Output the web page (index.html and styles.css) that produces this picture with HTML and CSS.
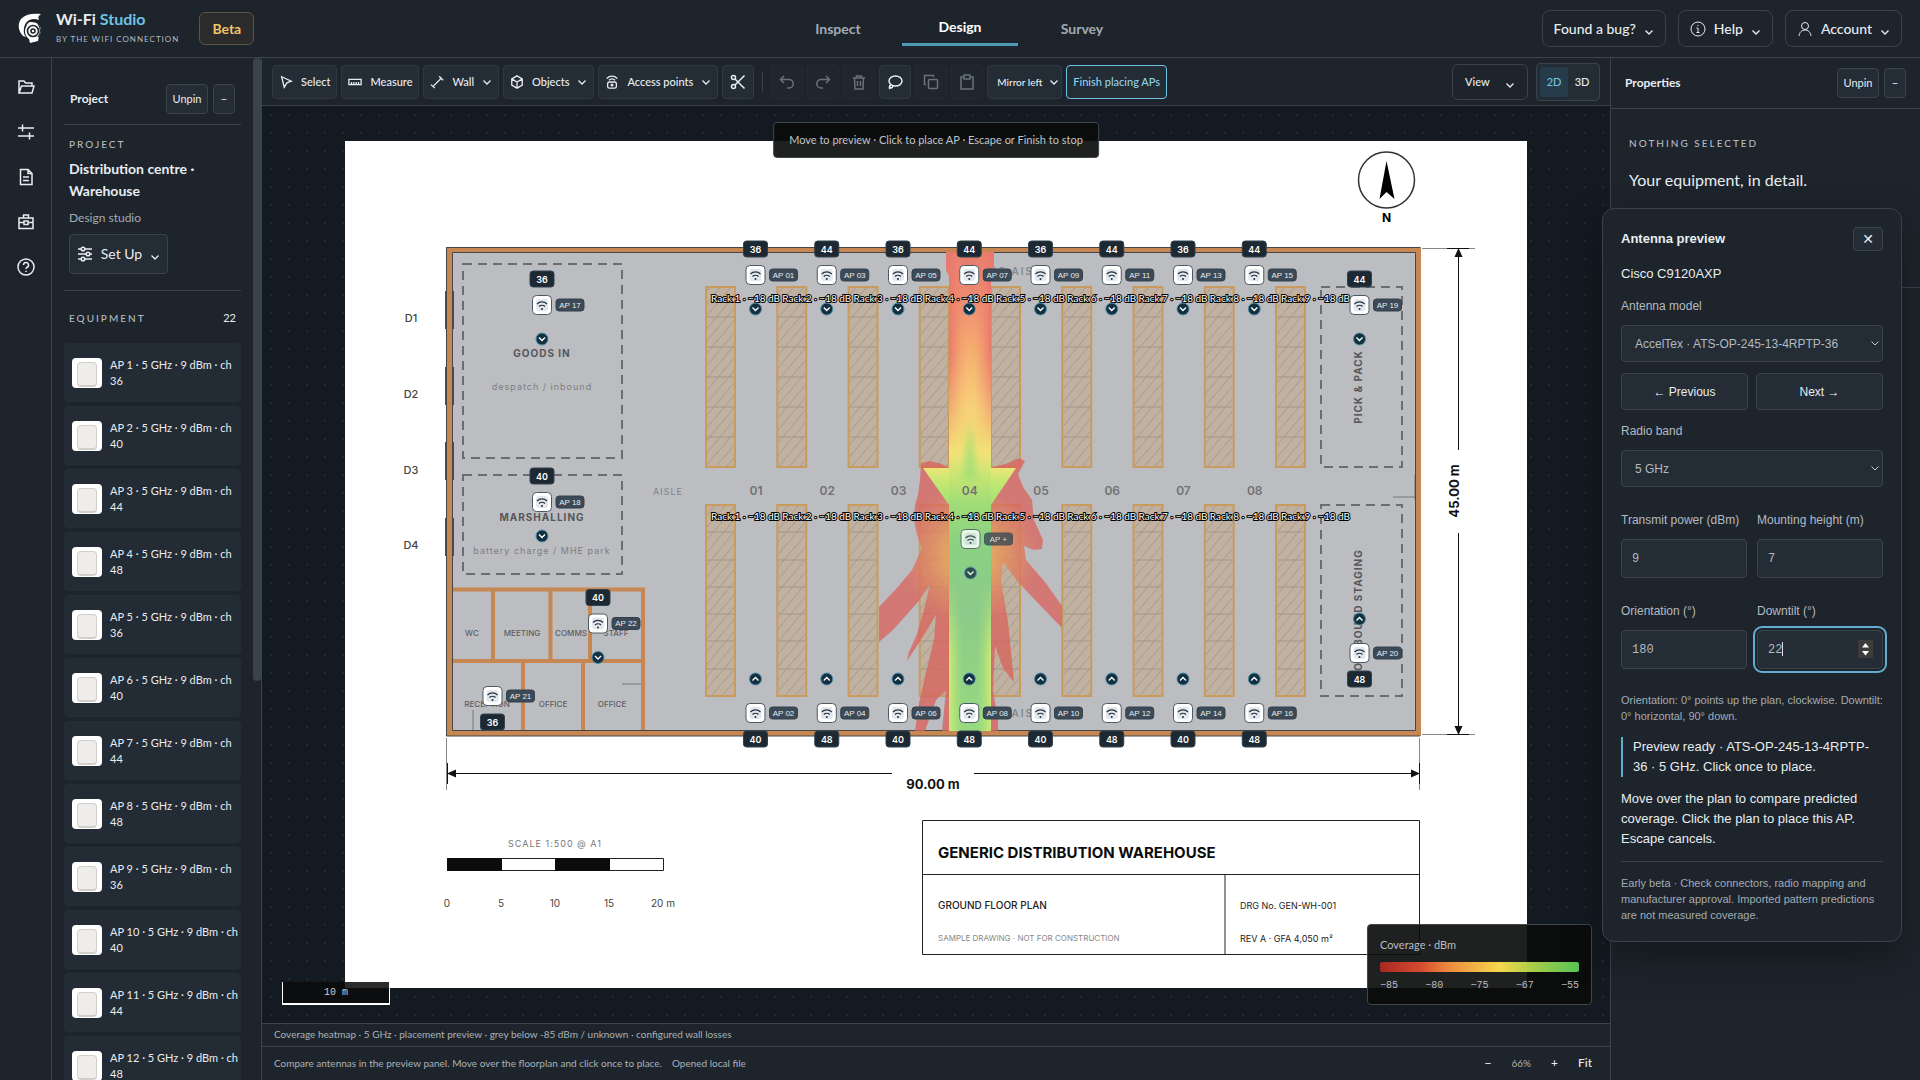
FILE: index.html
```html
<!DOCTYPE html>
<html lang="en">
<head>
<meta charset="utf-8">
<title>Wi-Fi Studio</title>
<link rel="stylesheet" href="styles.css">
</head>
<body>
<svg class="defs" aria-hidden="true">
  <symbol id="chev" viewBox="0 0 10 10"><path d="M1.500 3.500 5 7 8.500 3.500" /></symbol>
</svg>
<header class="topbar">
  <div class="brand">
    <svg class="logo" viewBox="0 0 24 31" aria-hidden="true"><path fill="#fff" d="M23 1c-3 2-3 4-2 6-9-3-14 2-15 8-.500 4 0 7 2 9l-3-1C0 18-1 10 4 5 8 1 15 0 23 1z"/><path fill="#fff" d="M13 9c6 0 10 3 10 8 0 3-1 4-2 6l-1 5-8 2-1-4c-4-3-5-8-3-12 1-3 2-5 5-5z"/><circle cx="15" cy="18" r="5.500" fill="none" stroke="#1d242c" stroke-width="1.600"/><circle cx="15" cy="18" r="2" fill="none" stroke="#1d242c" stroke-width="1.600"/><path d="M20 11c3 4 3 9 0 13" fill="none" stroke="#1d242c" stroke-width="1.200"/></svg>
    <div class="brand-text">
      <strong>Wi-Fi <span>Studio</span></strong>
      <small>BY THE WIFI CONNECTION</small>
    </div>
    <span class="beta">Beta</span>
  </div>
  <nav class="tabs">
    <a href="#inspect">Inspect</a>
    <a href="#design" class="active">Design</a>
    <a href="#survey">Survey</a>
  </nav>
  <div class="top-actions">
    <button>Found a bug? <svg class="chev low"><use href="#chev"/></svg></button>
    <button><svg class="icon thin" viewBox="0 0 16 16"><circle cx="8" cy="8" r="7"/><path d="M6.500 7H8v4.500M6.500 11.500h3M8 4v1"/></svg>Help <svg class="chev low"><use href="#chev"/></svg></button>
    <button><svg class="icon thin" viewBox="0 0 16 16"><circle cx="8" cy="5" r="3.500"/><path d="M2 15c.500-4 3-6 6-6s5.500 2 6 6"/></svg>Account <svg class="chev low"><use href="#chev"/></svg></button>
  </div>
</header>
<div class="workspace">
  <nav class="rail" aria-label="Sections">
    <button aria-label="Open"><svg class="icon" viewBox="0 0 18 18"><path d="M2 15V3h5l1.500 2H15v3M2 15l2.500-7H17l-2 7z"/></svg></button>
    <button aria-label="Settings"><svg class="icon" viewBox="0 0 18 18"><path d="M1 5h16M5.500 1.500v7M1 13h16M12.500 9.500v7"/></svg></button>
    <button aria-label="Report"><svg class="icon" viewBox="0 0 18 18"><path d="M3.500 1.500h7.500l4 4v11H3.500zM11 1.500v4h4M6 9h6M6 12.500h6"/></svg></button>
    <button aria-label="Toolkit"><svg class="icon" viewBox="0 0 18 18"><path d="M2 5h14v10.500H2zM6.500 5V2h5v3M2 9.500h5M11 9.500h5M7 8h4v3.500H7z"/></svg></button>
    <button aria-label="Help"><svg class="icon" viewBox="0 0 18 18"><circle cx="9" cy="9" r="8"/><path d="M6.500 7a2.500 2.500 0 1 1 3.500 2.300c-.700.400-1 .900-1 1.700M9 12.800v1.200"/></svg></button>
  </nav>
  <aside class="project">
    <div class="project-scroll">
      <div class="panel-head">
        <h2>Project</h2>
        <button class="mini">Unpin</button><button class="mini sq" aria-label="Collapse">−</button>
      </div>
      <section class="project-info">
        <p class="eyebrow">PROJECT</p>
        <h1>Distribution centre · Warehouse</h1>
        <p class="muted">Design studio</p>
        <button class="setup"><svg class="icon" viewBox="0 0 16 16"><path d="M1 3h14M1 8h14M1 13h14"/><circle class="knob" cx="6" cy="3" r="1.800"/><circle class="knob" cx="11" cy="8" r="1.800"/><circle class="knob" cx="6" cy="13" r="1.800"/></svg>Set Up <svg class="chev low"><use href="#chev"/></svg></button>
      </section>
      <section class="equipment">
        <div class="equipment-head"><p class="eyebrow">EQUIPMENT</p><span>22</span></div>
        <ul id="equipment-list"></ul>
      </section>
    </div>
    <div class="scrollbar"><div></div></div>
  </aside>
  <main class="stage">
    <div class="toolbar">
      <button><svg class="icon" viewBox="0 0 16 16"><path d="M3 2l11 5-5 2-3 5z"/></svg>Select</button>
      <button><svg class="icon" viewBox="0 0 16 16"><path d="M1 5h14v6H1zM4 8v3M6.700 8v3M9.400 8v3M12 8v3"/></svg>Measure</button>
      <button><svg class="icon" viewBox="0 0 16 16"><path d="M3.500 13 12.500 4M1 11l4.500 4M10.500 1.500 15 6"/></svg>Wall <svg class="chev"><use href="#chev"/></svg></button>
      <button><svg class="icon" viewBox="0 0 16 16"><path d="M8 1l6 3.500v7L8 15l-6-3.500v-7zM2 4.500 8 8l6-3.500M8 8v7"/></svg>Objects <svg class="chev"><use href="#chev"/></svg></button>
      <button><svg class="icon" viewBox="0 0 16 16"><path d="M2 4c3.500-3.500 8.500-3.500 12 0M4.500 6c2-2 5-2 7 0"/><rect x="3" y="8" width="10" height="7" rx="2"/><circle cx="8" cy="11.500" r="1"/></svg>Access points <svg class="chev"><use href="#chev"/></svg></button>
      <button class="tool" aria-label="Cut"><svg class="icon" viewBox="0 0 16 16"><circle cx="3.500" cy="3.500" r="2"/><circle cx="3.500" cy="12.500" r="2"/><path d="M5 5l9.500 9.500M5 11l9.500-9.500"/></svg></button>
      <span class="sep"></span>
      <button class="tool" disabled aria-label="Undo"><svg class="icon" viewBox="0 0 16 16"><path d="M5 2 1.500 5.500 5 9M1.500 5.500H10a4 4 0 0 1 0 8.500H8"/></svg></button>
      <button class="tool" disabled aria-label="Redo"><svg class="icon" viewBox="0 0 16 16"><path d="M11 2l3.500 3.500L11 9M14.500 5.500H6A4 4 0 0 0 6 14h2"/></svg></button>
      <button class="tool" disabled aria-label="Delete"><svg class="icon" viewBox="0 0 16 16"><path d="M2 4h12M5.500 4V2h5v2M3.500 4l.5 11h8l.5-11M6.500 7v5M9.500 7v5"/></svg></button>
      <button class="tool" aria-label="Lasso"><svg class="icon" viewBox="0 0 16 16"><ellipse cx="8.500" cy="7" rx="6.500" ry="5"/><path d="M4 11c-2 1-2 3-1 4M3 11.500a1.500 1.500 0 1 0 2.500 0"/></svg></button>
      <button class="tool" disabled aria-label="Copy"><svg class="icon" viewBox="0 0 16 16"><rect x="5.500" y="5.500" width="9" height="9" rx="1"/><path d="M3 10.500H1.500v-9h9V3"/></svg></button>
      <button class="tool" disabled aria-label="Paste"><svg class="icon" viewBox="0 0 16 16"><path d="M5 3H2v12h12V3h-3M5 1h6v4H5z"/></svg></button>
      <div class="mirror"><select aria-label="Mirror direction"><option>Mirror left</option></select><svg class="chev"><use href="#chev"/></svg></div>
      <button class="finish">Finish placing APs</button>
      <button class="view">View <svg class="chev low"><use href="#chev"/></svg></button>
      <div class="dims"><button class="on">2D</button><button>3D</button></div>
    </div>
    <div class="canvas">
      <svg class="plan" id="plan" viewBox="345 141 1182 847" role="img" aria-label="Warehouse floor plan">
        <defs>
          <pattern id="hatch" width="8" height="8" patternUnits="userSpaceOnUse" patternTransform="rotate(40)"><rect width="8" height="8" fill="#c0b1a0"/><path d="M0 0v8" stroke="#a89a8b" stroke-width="1.600"/></pattern>
          <linearGradient id="aisle" x1="0" y1="252" x2="0" y2="731" gradientUnits="userSpaceOnUse">
            <stop offset="0" stop-color="#e47a70"/><stop offset=".1" stop-color="#ee8b70"/><stop offset=".2" stop-color="#f5ac70"/><stop offset=".32" stop-color="#f8cf78"/><stop offset=".42" stop-color="#f2e276"/><stop offset=".46" stop-color="#cfe674"/><stop offset=".52" stop-color="#a2dd75"/><stop offset=".6" stop-color="#8bd283"/><stop offset=".75" stop-color="#8bca8a"/><stop offset="1" stop-color="#97da7f"/>
          </linearGradient>
          <linearGradient id="edge"><stop offset="0" stop-color="#e9786c"/><stop offset=".4" stop-color="#f0907000"/><stop offset=".6" stop-color="#f0907000"/><stop offset="1" stop-color="#e9786c"/></linearGradient>
          <linearGradient id="edge2"><stop offset="0" stop-color="#cfe878"/><stop offset=".35" stop-color="#a5e07a00"/><stop offset=".65" stop-color="#a5e07a00"/><stop offset="1" stop-color="#cfe878"/></linearGradient>
          <linearGradient id="fade-down" x1="0" y1="252" x2="0" y2="450" gradientUnits="userSpaceOnUse"><stop offset=".5" stop-color="#fff"/><stop offset="1" stop-color="#000"/></linearGradient>
          <linearGradient id="fade-up" x1="0" y1="580" x2="0" y2="731" gradientUnits="userSpaceOnUse"><stop offset="0" stop-color="#000"/><stop offset=".5" stop-color="#fff"/></linearGradient>
          <mask id="upper"><path fill="url(#fade-down)" d="M940 240h60v220h-60z"/></mask>
          <mask id="lower"><path fill="url(#fade-up)" d="M940 570h60v170h-60z"/></mask>
          <linearGradient id="arrow" x1="0" y1="468" x2="0" y2="506" gradientUnits="userSpaceOnUse"><stop offset="0" stop-color="#ece676"/><stop offset=".35" stop-color="#c6e873"/><stop offset="1" stop-color="#9fe072"/></linearGradient>
          <radialGradient id="wing" cx="970" cy="556" r="150" gradientUnits="userSpaceOnUse"><stop offset=".14" stop-color="#eda455"/><stop offset=".3" stop-color="#e17f5a"/><stop offset=".45" stop-color="#d9655e"/><stop offset="1" stop-color="#d8625c"/></radialGradient>
          <filter id="softer" x="-50%" y="-50%" width="200%" height="200%"><feGaussianBlur stdDeviation="3"/></filter>
          <clipPath id="aisle-clip"><path d="M949 252h42v479h-42z"/></clipPath>
        </defs>
        <rect x="345" y="141" width="1182" height="847" fill="#fff"/>
        <rect x="446" y="247" width="975" height="489" fill="#bcbdc1"/>

        <g class="doors"><rect x="445" y="291" width="9" height="38"/><rect x="445" y="367" width="9" height="38"/><rect x="445" y="442" width="9" height="38"/><rect x="445" y="518" width="9" height="38"/></g>
        <g class="door-labels"><text x="411" y="318">D1</text><text x="411" y="394">D2</text><text x="411" y="470">D3</text><text x="411" y="545">D4</text></g>

        <g class="zone"><rect x="463" y="264" width="159" height="194"/><rect x="463" y="475" width="159" height="99"/><rect x="1321" y="287" width="81" height="180"/><rect x="1321" y="505" width="81" height="191"/></g>
        <g class="zone-name"><text x="542" y="353">GOODS IN</text><text x="542" y="517">MARSHALLING</text><text transform="translate(1358 387) rotate(-90)">PICK &amp; PACK</text><text transform="translate(1358 610) rotate(-90)">OUTBOUND STAGING</text></g>
        <g class="zone-note"><text x="542" y="386">despatch / inbound</text><text x="542" y="550">battery charge / MHE park</text></g>
        <g class="cross"><text x="1006" y="271">CROSS AISLE</text><text x="1006" y="713">CROSS AISLE</text></g>
        <g class="room-name"><text x="472" y="633">WC</text><text x="522" y="633">MEETING</text><text x="571" y="633">COMMS</text><text x="616" y="633">STAFF</text><text x="487" y="704">RECEPTION</text><text x="553" y="704">OFFICE</text><text x="612" y="704">OFFICE</text></g>
        <path class="door-line" d="M622 684h19M473 710v21M1393 497h22M1415 475v25"/>
        <path class="partition" d="M451 589.500H643V733M451 661H643M493 589v72M550.500 589v72M590 589v72M523 661v72M583 661v72"/>
        <path class="wall" d="M449.500 249.500H1418.500V733.500H449.500z"/>
        <path class="wall-line" d="M452.500 252.500H1415.500V730.500H452.500zM446.500 736V247.500H1420M446.500 736H1420"/>

        <g id="racks"></g>
        <g class="heat">
          <path fill="url(#wing)" opacity=".78" d="M921 463 930 461 942 464 949 468V731H942L946 690 936 700 925 731H915L919 703 926 672 934 640 936 614 926 632 907 661 909 652 917 634 925 606 930 584 918 602 893 630 879 642V607L897 588 912 570 922 548 917 535 914 520 915 505 918 495 920 480z"/>
          <path fill="url(#wing)" opacity=".78" d="M991 468 1008 463 1019 458 1025 461 1018 474 1023 487 1032 500 1034 520 1043 540 1042 549 1034 550 1024 546 1026 560 1045 582 1062 606V628L1038 603 1019 583 1003 562 1001 580 1008 622 1014 682 1003 668 995 646 993 690 998 720V731H991z"/>
          <path fill="url(#arrow)" d="M923 468h93l-25 37h-42z"/>
          <path fill="#e47a70" d="M946 252h48v14l-3 10h-42l-3-6z"/>
          <path fill="url(#aisle)" d="M949 252h42v479h-42z"/>
          <path fill="url(#edge)" mask="url(#upper)" d="M949 252h42v198h-42z"/>
          <path fill="url(#edge2)" mask="url(#lower)" d="M949 580h42v151h-42z"/>
          <g clip-path="url(#aisle-clip)"><path fill="#a2df74" opacity=".8" filter="url(#softer)" d="M970 420l8 60h-16z"/></g>
        </g>
        <g id="aisle-numbers" class="aisle-no"></g>
        <text class="aisle-word" x="668" y="491">AISLE</text>
        <g id="rack-labels" class="rack-label"></g>

        <g class="dim">
          <path class="ext" d="M446.500 738v52M1419.500 738v52M1422 248.500h53M1422 734.500h53"/>
          <path d="M447 773.500H892M974 773.500H1419M447.500 763v21M1419.500 763v21M1458.500 249V450M1458.500 533V734M1447 248.500h22M1447 734.500h22"/>
          <path class="head" d="M447 773.500l9-4v8zM1420 773.500l-9-4v8zM1458.500 248l-4 9h8zM1458.500 735l-4-9h8z"/>
          <text x="933" y="784">90.00 m</text><text transform="translate(1454 491) rotate(-90)">45.00 m</text>
        </g>
        <circle class="compass" cx="1386.500" cy="180" r="28"/><path d="M1386.500 161l8 38-8-7-7 7z"/><text class="north" x="1386.500" y="217">N</text>

        <text class="scale-title" x="555" y="843">SCALE 1:500 @ A1</text>
        <path class="frame" d="M447.500 858.500h216v12h-216z"/><path fill="#0c0c0c" d="M447 858h55v13h-55zM555 858h55v13h-55z"/>
        <g class="scale-no"><text x="447" y="903">0</text><text x="501" y="903">5</text><text x="555" y="903">10</text><text x="609" y="903">15</text><text x="663" y="903">20 m</text></g>
        <path class="block" d="M922.500 820.500H1419.500V954.500H922.500zM922.500 874.500H1419.500M1225 874.500v80"/>
        <text class="t-title" x="938" y="852">GENERIC DISTRIBUTION WAREHOUSE</text>
        <text class="t-sub" x="938" y="905">GROUND FLOOR PLAN</text>
        <text class="t-note" x="938" y="938">SAMPLE DRAWING · NOT FOR CONSTRUCTION</text>
        <text class="t-ref" x="1240" y="905">DRG No. GEN-WH-001</text>
        <text class="t-ref" x="1240" y="938">REV A · GFA 4,050 m²</text>
        <g id="markers"></g>
      </svg>
      <p class="toast">Move to preview · Click to place AP · Escape or Finish to stop</p>
      <div class="scale-tag">10 m</div>
      <div class="legend"><p>Coverage · dBm</p><div class="ramp"></div><div class="ticks"><span>−85</span><span>−80</span><span>−75</span><span>−67</span><span>−55</span></div></div>
    </div>
    <div class="status">Coverage heatmap · 5 GHz · placement preview · grey below -85 dBm / unknown · configured wall losses</div>
    <footer class="foot"><span>Compare antennas in the preview panel. Move over the floorplan and click once to place.</span><span>Opened local file</span>
      <div class="zoom"><button aria-label="Zoom out">−</button><output>66%</output><button aria-label="Zoom in">+</button><button>Fit</button></div></footer>
  </main>
  <aside class="props">
    <div class="panel-head"><h2>Properties</h2><button class="mini">Unpin</button><button class="mini sq" aria-label="Collapse">−</button></div>
    <section class="nothing"><p class="eyebrow">NOTHING SELECTED</p><p class="lead">Your equipment, in detail.</p></section>
  </aside>
</div>
<form class="antenna">
  <div class="antenna-head"><h2>Antenna preview</h2><button type="button" aria-label="Close">✕</button></div>
  <p class="device">Cisco C9120AXP</p>
  <label for="model">Antenna model</label>
  <div class="drop"><select id="model"><option>AccelTex · ATS-OP-245-13-4RPTP-36</option></select><svg class="chev"><use href="#chev"/></svg></div>
  <div class="pair steps"><button type="button">← Previous</button><button type="button">Next →</button></div>
  <label for="band">Radio band</label>
  <div class="drop"><select id="band"><option>5 GHz</option></select><svg class="chev"><use href="#chev"/></svg></div>
  <div class="pair fields">
    <div><label for="power">Transmit power (dBm)</label><input id="power" value="9"></div>
    <div><label for="height">Mounting height (m)</label><input id="height" value="7"></div>
    <div><label for="orient">Orientation (°)</label><input id="orient" value="180"></div>
    <div class="focused"><label for="tilt">Downtilt (°)</label><input id="tilt" value="22"><span class="caret"></span><span class="spin"><svg viewBox="0 0 15 18"><path fill="#fff" d="M7.500 3l3.500 4.500H4zM7.500 15.500 4 11h7z"/></svg></span></div>
  </div>
  <p class="hint">Orientation: 0° points up the plan, clockwise. Downtilt: 0° horizontal, 90° down.</p>
  <p class="ready">Preview ready · ATS-OP-245-13-4RPTP-36 · 5 GHz. Click once to place.</p>
  <p class="move">Move over the plan to compare predicted coverage. Click the plan to place this AP. Escape cancels.</p>
  <p class="early">Early beta · Check connectors, radio mapping and manufacturer approval. Imported pattern predictions are not measured coverage.</p>
</form>
<script src="app.js"></script>
</body>
</html>
```
FILE: styles.css
```css
* { box-sizing: border-box; }
:root { --bg: #1d242b; --btn: #242c35; --line: #3a424b; --soft: #303842; --text: #e8edf2; --muted: #a4abb3; --accent: #6fc3e2; --ui: Lato, "Noto Sans", sans-serif; --arial: "Liberation Sans", Arial, sans-serif; --plan: Inter, sans-serif; }
body { margin: 0; height: 100vh; display: flex; flex-direction: column; overflow: hidden; background: var(--bg); color: var(--text); font: 12px/16px var(--ui); }
h1, h2, p, ul { margin: 0; padding: 0; }
button, select, input { font: inherit; color: inherit; margin: 0; }
button { display: flex; align-items: center; justify-content: center; gap: 8px; padding: 0; background: none; border: 0; white-space: nowrap; }
.defs { position: absolute; width: 0; height: 0; }
.icon { width: 16px; height: 16px; flex: none; fill: none; stroke: currentColor; stroke-width: 1.5; }
.icon.thin { stroke-width: 1; }
.chev { width: 10px; height: 10px; flex: none; fill: none; stroke: currentColor; stroke-width: 1.3; }
.low { margin-top: 6px; }
.knob { fill: var(--btn); }

.topbar { flex: none; height: 58px; display: grid; grid-template-columns: 1fr auto 1fr; align-items: center; padding: 0 18px; border-bottom: 1px solid var(--line); }
.brand { display: flex; align-items: center; }
.logo { width: 24px; height: 31px; margin-right: 14px; }
.brand-text { display: flex; flex-direction: column; gap: 4px; }
.brand-text strong { font-size: 16px; line-height: 16px; }
.brand-text span { color: var(--accent); }
.brand-text small { font-size: 8px; line-height: 16px; letter-spacing: 1px; color: #b3bac2; }
.beta { margin-left: 20px; padding: 0 12px; border: 1px solid #5c563f; border-radius: 6px; background: #2a2b2a; color: #f2c568; font-weight: 700; font-size: 14px; line-height: 31px; }
.tabs { display: flex; gap: 6px; }
.tabs a { width: 116px; text-align: center; text-decoration: none; color: #a4abb3; font-weight: 700; font-size: 14px; line-height: 28px; padding-top: 4px; border-bottom: 3px solid transparent; }
.tabs a.active { color: #fff; border-color: #4c9bb5; padding: 2px 0; }
.top-actions { display: flex; justify-content: flex-end; gap: 12px; }
.top-actions button { height: 37px; padding: 0 11px; border: 1px solid var(--line); border-radius: 8px; font-size: 14px; font-weight: 500; }

.workspace { flex: 1; min-height: 0; display: flex; }
.rail { flex: none; width: 52px; border-right: 1px solid var(--line); padding-top: 6px; }
.rail button { width: 51px; height: 45px; }
.rail .icon { width: 18px; height: 18px; }
.project { flex: none; width: 210px; display: flex; border-right: 1px solid var(--line); }
.project-scroll { flex: 1; padding: 26px 12px 0; overflow-y: auto; scrollbar-width: none; }
.scrollbar { flex: none; width: 8px; }
.scrollbar div { height: 61%; background: #3a434d; border-radius: 4px; }
.panel-head { display: flex; align-items: center; gap: 5px; }
.panel-head h2 { flex: 1; font-size: 12px; line-height: 16px; }
.mini { height: 30px; width: 42px; background: var(--btn); border: 1px solid var(--line); border-radius: 4px; font-size: 11px; }
.mini.sq { width: 22px; }
.project .panel-head { padding: 0 6px 10px; border-bottom: 1px solid var(--line); }
.eyebrow { font-size: 10px; line-height: 16px; letter-spacing: 2px; color: #b3bac2; font-weight: 500; }
.project-info { padding: 11px 5px 16px; border-bottom: 1px solid var(--line); }
.project-info h1 { margin-top: 6px; font-size: 14px; line-height: 22px; }
.muted { color: var(--muted); line-height: 20px; margin: 6px 0; }
.setup { width: 99px; height: 40px; background: var(--btn); border: 1px solid var(--line); border-radius: 4px; font-size: 14px; }
.equipment-head { display: flex; justify-content: space-between; padding: 19px 5px 17px; }
.equipment-head span { font-size: 11px; }
.equipment ul { list-style: none; display: flex; flex-direction: column; gap: 4px; padding-bottom: 17px; }
.equipment li { flex: none; height: 59px; display: flex; align-items: center; gap: 8px; padding: 0 0 0 7px; background: #232b34; border: 1px solid #252d37; border-radius: 4px; font-size: 11px; }
.thumb { flex: none; width: 30px; height: 30px; padding: 4px 5px; background: #fff; border-radius: 4px; }
.thumb::before { content: ""; display: block; height: 22px; border-radius: 4px; background: #eeedeb; border: 1px solid #d2cfcb; border-width: 1px 1px 2px; }

.stage { flex: 1; min-width: 0; display: flex; flex-direction: column; }
.toolbar { flex: none; height: 48px; display: flex; align-items: center; gap: 4px; padding: 0 10px; border-bottom: 1px solid var(--line); font-size: 11px; font-weight: 500; }
.toolbar > button, .mirror select { height: 34px; padding: 0 6px; background: var(--btn); border: 1px solid var(--soft); border-radius: 4px; }
.toolbar .icon { width: 14px; height: 14px; }
.toolbar > .tool { width: 32px; }
.toolbar > .tool .icon { width: 16px; height: 16px; }
.tool:disabled { color: #69717a; border-color: #242b34; background: #1f262e; }
.sep { width: 1px; height: 20px; margin: 0 4px; background: var(--line); }
.mirror { position: relative; }
.mirror select { appearance: none; display: block; width: 75px; padding: 0 0 0 9px; font-size: 10px; }
.mirror .chev { position: absolute; right: 3px; top: 12px; pointer-events: none; }
.toolbar > .finish { border-color: var(--accent); color: #8fd0ea; }
.toolbar > .view { width: 76px; height: 36px; margin-left: auto; padding: 0 12px; justify-content: space-between; background: none; border-color: var(--line); border-radius: 6px; }
.dims { display: flex; height: 38px; padding: 3px; margin-left: 4px; background: var(--btn); border: 1px solid var(--line); border-radius: 4px; }
.dims button { width: 28px; border-radius: 3px; }
.dims .on { background: #263c4a; color: var(--accent); }

.canvas { flex: 1; min-height: 0; position: relative; padding: 35px; background: #131a21 radial-gradient(circle at 9px 9px, #222a32 1px, transparent 1.5px) 0 0 / 18px 18px; }
.plan { display: block; width: 100%; height: 100%; }
.plan text { font-family: var(--plan); text-anchor: middle; dominant-baseline: central; }
.doors rect { fill: #4b4d50; }
.door-labels { font-size: 11px; fill: #444; font-weight: 500; }
.zone rect { fill: none; stroke: #6c6d71; stroke-width: 2; stroke-dasharray: 9 6; }
.zone-name { font-size: 10px; font-weight: 700; letter-spacing: 1px; fill: #55565a; }
.zone-note { font-size: 9px; letter-spacing: 1px; fill: #7d7e82; }
.cross { font-size: 10px; font-weight: 600; letter-spacing: 2px; fill: #85868a; }
.room-name { font-size: 8px; font-weight: 500; fill: #5c5d61; }
.door-line { fill: none; stroke: #75767a; }
.partition { fill: none; stroke: #c68752; stroke-width: 4; }
.wall { fill: none; stroke: #c68752; stroke-width: 5; }
.wall-line { fill: none; stroke: #44464a; }
#racks rect { fill: url(#hatch); stroke: #c99b5f; stroke-width: 2; }
#racks path { stroke: #a59685; fill: none; }
.aisle-no { font-size: 12px; font-weight: 600; fill: #707275; }
.aisle-word { font-size: 9px; letter-spacing: 1px; fill: #808185; }
.plan .rack-label text { text-anchor: start; font-family: var(--ui); font-size: 10px; fill: #fff; stroke: #000; stroke-width: 2px; paint-order: stroke; }
.dim path { stroke: #111; fill: none; }
.dim .ext { stroke: #888; }
.dim .head { fill: #111; stroke: none; }
.dim text { font-size: 13px; font-weight: 700; fill: #111; }
.compass { fill: none; stroke: #333; stroke-width: 1.5; }
.north { font-size: 12px; font-weight: 700; }
.scale-title { font-size: 9px; letter-spacing: 1px; fill: #777; }
.frame, .block { fill: none; stroke: #222; }
.scale-no { font-size: 10px; fill: #444; }
.plan .t-title, .plan .t-sub, .plan .t-note, .plan .t-ref { text-anchor: start; fill: #222; }
.plan .t-title { font-size: 15px; font-weight: 700; fill: #0c0c0c; }
.t-sub { font-size: 10px; font-weight: 500; }
.plan .t-note { font-size: 8px; fill: #888; }
.t-ref { font-size: 9px; }
.m-badge { fill: #1c2832; stroke: #33424e; }
.m-ch { font-size: 9px; font-weight: 600; fill: #fff; }
.m-ap { fill: #fff; stroke: #4d5a66; }
.m-tint { fill: #e2e8ee; }
.m-wifi { fill: #26323d; stroke: none; }
.m-wifi path { fill: none; stroke: #26323d; stroke-width: 1.2; }
.m-pill { fill: #3b4a56; stroke: #33414d; }
.plan .m-name { font-family: var(--arial); font-size: 8px; fill: #e6ebf0; }
.m-dot { fill: #12303f; stroke: #4c8aa8; }
.m-dir { fill: none; stroke: #fff; stroke-width: 1.4; }
.ghost { opacity: .8; }
.toast { position: absolute; top: 16px; left: 50%; transform: translateX(-50%); padding: 0 15px; line-height: 34px; font-size: 11px; white-space: nowrap; color: #c0c4c8; background: #0b0c0cea; border: 1px solid #41464b; border-radius: 4px; }
.scale-tag { position: absolute; left: 20px; bottom: 18px; width: 108px; text-align: center; font: 10px/21px "Liberation Mono", monospace; color: #ccc; background: #0b0c0cdd; border: 1px solid #fff; border-top: 0; border-bottom-width: 2px; }
.legend { position: absolute; right: 18px; bottom: 18px; width: 225px; height: 81px; padding: 12px; color: #b9bdc2; font-size: 11px; background: #0b0c0cea; border: 1px solid #41464b; border-radius: 4px; }
.ramp { height: 10px; margin: 9px 0 6px; border-radius: 2px; background: linear-gradient(90deg, #a52a22, #d6492f 20%, #ee8c3e 35%, #f4d84c 60%, #9ccb4a 80%, #56c454); }
.ticks { display: flex; justify-content: space-between; font: 10px/16px "Liberation Mono", monospace; }
.status { flex: none; height: 23px; padding: 0 12px; border-top: 1px solid var(--line); line-height: 21px; font-size: 10px; color: #abb2b9; }
.foot { flex: none; height: 34px; display: flex; align-items: center; gap: 10px; padding: 0 18px 2px 12px; border-top: 1px solid var(--line); font-size: 10px; color: #abb2b9; }
.zoom { margin-left: auto; display: flex; align-items: center; gap: 20px; }
.zoom button { color: var(--text); font-size: 12px; font-weight: 500; }

.props { flex: none; width: 310px; border-left: 1px solid var(--line); }
.props .panel-head { height: 51px; padding: 0 14px; border-bottom: 1px solid var(--line); }
.nothing { height: 179px; padding: 26px 18px; border-bottom: 1px solid var(--line); }
.lead { margin-top: 17px; font-size: 16px; line-height: 24px; }

.antenna { position: absolute; top: 208px; right: 18px; width: 300px; padding: 17px 18px 18px; background: var(--bg); border: 1px solid var(--line); border-radius: 12px; box-shadow: 0 16px 40px #0005; font: 13px/20px var(--arial); }
.antenna-head { display: flex; justify-content: space-between; align-items: center; height: 26px; }
.antenna-head h2 { font-size: 13px; }
.antenna-head button { width: 30px; height: 24px; background: var(--btn); border: 1px solid var(--line); border-radius: 4px; font-family: "DejaVu Sans", sans-serif; font-size: 14px; }
.device { margin: 12px 0; }
.antenna label { display: block; font-size: 12px; color: #b3bac2; }
.drop { position: relative; margin: 9px 0 11px; }
.drop .chev { position: absolute; right: 3px; top: 13px; pointer-events: none; color: #c4cad0; stroke-width: 1; }
.drop select, .fields input { display: block; appearance: none; width: 100%; height: 37px; padding: 0 13px; font-size: 12px; color: #b3bac2; background: var(--btn); border: 1px solid var(--line); border-radius: 4px; outline: 0; }
.pair { display: grid; grid-template-columns: 1fr 1fr; gap: 8px; }
.steps { margin-bottom: 11px; }
.steps button { height: 37px; font-size: 12px; background: var(--btn); border: 1px solid var(--line); border-radius: 4px; }
.fields { gap: 23px 10px; margin-top: 23px; }
.fields > div { position: relative; }
.fields input { height: 39px; margin-top: 9px; padding: 0 10px; font-family: "Liberation Mono", monospace; }
.focused input { outline: 2px solid #62acd0; outline-offset: 2px; border-radius: 5px; }
.caret { position: absolute; left: 25px; top: 41px; width: 1px; height: 14px; background: #dde; }
.spin { position: absolute; right: 10px; top: 39px; width: 15px; height: 18px; background: #3c3c3c; }
.spin svg { display: block; }
.hint { margin: 23px 0 13px; font-size: 11px; line-height: 16px; color: #a4abb3; }
.ready { padding-left: 10px; border-left: 2px solid #62acd0; }
.move { margin: 12px 0; }
.early { border-top: 1px solid var(--line); padding-top: 13px; font-size: 11px; line-height: 16px; color: #a4abb3; }
```
FILE: app.js
```js
const channels = [36, 40, 44, 48];
const channelOf = n => channels[(n - 1) % 4];

document.getElementById('equipment-list').innerHTML = Array.from({ length: 22 }, (_, i) =>
  `<li><span class="thumb"></span><span>AP ${i + 1} · 5 GHz · 9 dBm · ch ${channelOf(i + 1)}</span></li>`).join('');

const pitch = 71.25;
let racks = '', labels = '', numbers = '';
for (let i = 0; i < 9; i++) {
  const x = 706 + i * pitch;
  for (const [y, h, cells] of [[287, 180, 6], [505, 191, 7]]) {
    racks += `<rect x="${x}" y="${y}" width="29" height="${h}"/>`;
    for (let c = 1; c < cells; c++) racks += `<path d="M${x + 1} ${Math.round(y + h * c / cells)}h27"/>`;
    labels += `<text x="${x + 5}" y="${y + 11}">Rack ${i + 1} · −18 dB</text>`;
  }
  if (i < 8) numbers += `<text x="${756 + i * pitch}" y="490">0${i + 1}</text>`;
}
document.getElementById('racks').innerHTML = racks;
document.getElementById('rack-labels').innerHTML = labels;
document.getElementById('aisle-numbers').innerHTML = numbers;

// dir: 1 = channel badge above and beam pointing down, -1 = the reverse
function marker({ x, y, name, ch, dir, beam = true, cls = '' }) {
  const badge = ch ? `<rect class="m-badge" x="-12" y="${-26 * dir - 8}" width="24" height="16" rx="3"/><text class="m-ch" y="${-26 * dir}">${ch}</text>` : '';
  const arrow = beam ? `<g transform="translate(0 ${34 * dir})"><circle class="m-dot" r="6"/><path class="m-dir" d="M-3 ${-1.5 * dir}L0 ${1.5 * dir}L3 ${-1.5 * dir}"/></g>` : '';
  return `<g class="${cls}" transform="translate(${x} ${y})">${badge}${arrow}
    <rect class="m-ap" x="-9.500" y="-9.500" width="19" height="19" rx="4"/><rect class="m-tint" x="-6" y="-6" width="12" height="12" rx="3"/>
    <g class="m-wifi"><path d="M-5-1a7 7 0 0 1 10 0M-3 1.500a4.300 4.300 0 0 1 6 0"/><circle cy="4" r="1"/></g>
    <rect class="m-pill" x="14" y="-6" width="28" height="12" rx="3"/><text class="m-name" x="28">${name}</text></g>`;
}
const aps = [];
for (let i = 0; i < 8; i++) {
  const x = 755.5 + i * pitch;
  aps.push({ n: 2 * i + 1, x, y: 275, dir: 1 }, { n: 2 * i + 2, x, y: 713, dir: -1 });
}
aps.push({ n: 17, x: 542, y: 305, dir: 1 }, { n: 18, x: 542, y: 502, dir: 1 }, { n: 19, x: 1359.5, y: 305, dir: 1 },
  { n: 20, x: 1359.5, y: 653, dir: -1 }, { n: 21, x: 492.5, y: 696, dir: -1, beam: false }, { n: 22, x: 598, y: 623.5, dir: 1 });
document.getElementById('markers').innerHTML =
  aps.map(a => marker({ ...a, name: 'AP ' + String(a.n).padStart(2, '0'), ch: channelOf(a.n) })).join('') +
  marker({ x: 970.5, y: 539, name: 'AP +', dir: 1, cls: 'ghost' });
```
